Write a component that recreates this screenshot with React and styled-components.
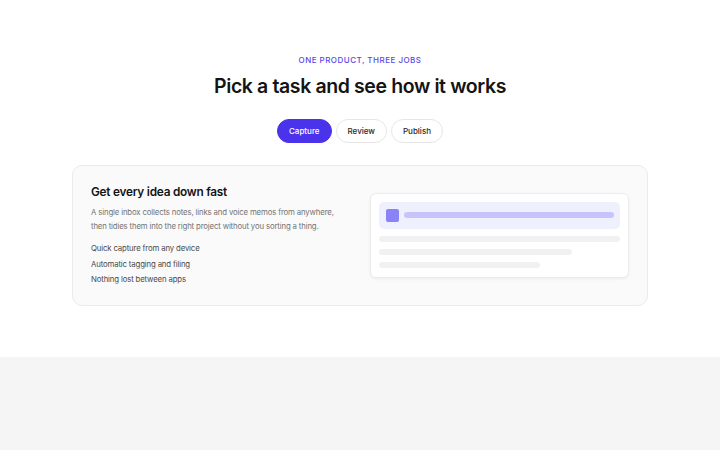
import React, { useState } from 'react';
import styled, { createGlobalStyle } from 'styled-components';

const GlobalStyle = createGlobalStyle`
  html, body {
    margin: 0;
    padding: 0;
    background: #f5f5f5;
    font-family: Inter, "Noto Sans", "Liberation Sans", sans-serif;
    color: #141414;
  }
`;

const Section = styled.section`
  background: #fff;
  height: 357px;
  padding-top: 54px;
  box-sizing: border-box;
  display: flex;
  flex-direction: column;
  align-items: center;
`;

const Eyebrow = styled.div`
  font-size: 8px;
  font-weight: 500;
  letter-spacing: 0.06em;
  color: #5a47e6;
  text-transform: uppercase;
  line-height: 12px;
`;

const Heading = styled.h2`
  margin: 6px 0 0;
  font-size: 19.5px;
  font-weight: 600;
  letter-spacing: -0.02em;
  line-height: 28px;
`;

const Tabs = styled.div`
  display: flex;
  gap: 4px;
  margin-top: 19px;
`;

const Tab = styled.button`
  height: 24px;
  padding: 0 11px;
  border-radius: 12px;
  font-family: inherit;
  font-size: 8px;
  font-weight: 500;
  cursor: pointer;
  border: 1px solid ${p => (p.$active ? '#4a33ea' : '#e6e6e6')};
  background: ${p => (p.$active ? '#4a33ea' : '#fff')};
  color: ${p => (p.$active ? '#fff' : '#2a2a2a')};
`;

const Card = styled.div`
  margin-top: 22px;
  width: 576px;
  box-sizing: border-box;
  border: 1px solid #ebebeb;
  border-radius: 10px;
  background: #fafafa;
  padding: 17px 18px;
  display: grid;
  grid-template-columns: 1fr 1fr;
  gap: 20px;
  align-items: center;
`;

const Copy = styled.div`
  display: flex;
  flex-direction: column;
`;

const Title = styled.h3`
  margin: 0;
  font-size: 11.8px;
  font-weight: 600;
  line-height: 18px;
  letter-spacing: -0.02em;
`;

const Body = styled.p`
  margin: 4px 0 0;
  font-size: 7.8px;
  letter-spacing: -0.02em;
  line-height: 14px;
  color: #747474;
`;

const Points = styled.ul`
  list-style: none;
  margin: 8px 0 0;
  padding: 0;
`;

const Point = styled.li`
  font-size: 7.8px;
  letter-spacing: -0.02em;
  line-height: 15.5px;
  color: #4a4a4a;
`;

const Mock = styled.div`
  background: #fff;
  border: 1px solid #ececec;
  border-radius: 6px;
  box-shadow: 0 1px 3px rgba(0, 0, 0, 0.06);
  padding: 8px 8px 9px;
  display: flex;
  flex-direction: column;
  gap: 7px;
`;

const Active = styled.div`
  height: 27px;
  border-radius: 5px;
  background: #eef0fe;
  display: flex;
  align-items: center;
  gap: 5px;
  padding: 0 6px 0 7px;
`;

const Dot = styled.div`
  width: 13px;
  height: 13px;
  border-radius: 2px;
  background: #8a83f7;
`;

const Line = styled.div`
  height: ${p => p.$h || 6}px;
  width: ${p => p.$w || '100%'};
  border-radius: 3px;
  background: ${p => p.$c || '#f1f1f1'};
  flex: ${p => (p.$grow ? 1 : 'none')};
`;

const Footer = styled.div`
  height: 93px;
  background: #f5f5f5;
`;

const tabs = ['Capture', 'Review', 'Publish'];

export default function App() {
  const [tab, setTab] = useState('Capture');
  return (
    <>
      <GlobalStyle />
      <Section>
        <Eyebrow>One product, three jobs</Eyebrow>
        <Heading>Pick a task and see how it works</Heading>
        <Tabs>
          {tabs.map(t => (
            <Tab key={t} $active={t === tab} onClick={() => setTab(t)}>
              {t}
            </Tab>
          ))}
        </Tabs>
        <Card>
          <Copy>
            <Title>Get every idea down fast</Title>
            <Body>
              A single inbox collects notes, links and voice memos from anywhere,
              then tidies them into the right project without you sorting a thing.
            </Body>
            <Points>
              <Point>Quick capture from any device</Point>
              <Point>Automatic tagging and filing</Point>
              <Point>Nothing lost between apps</Point>
            </Points>
          </Copy>
          <Mock>
            <Active>
              <Dot />
              <Line $grow $h={6} $c="#c8c4fb" />
            </Active>
            <Line />
            <Line $w="80%" />
            <Line $w="67%" />
          </Mock>
        </Card>
      </Section>
      <Footer />
    </>
  );
}
